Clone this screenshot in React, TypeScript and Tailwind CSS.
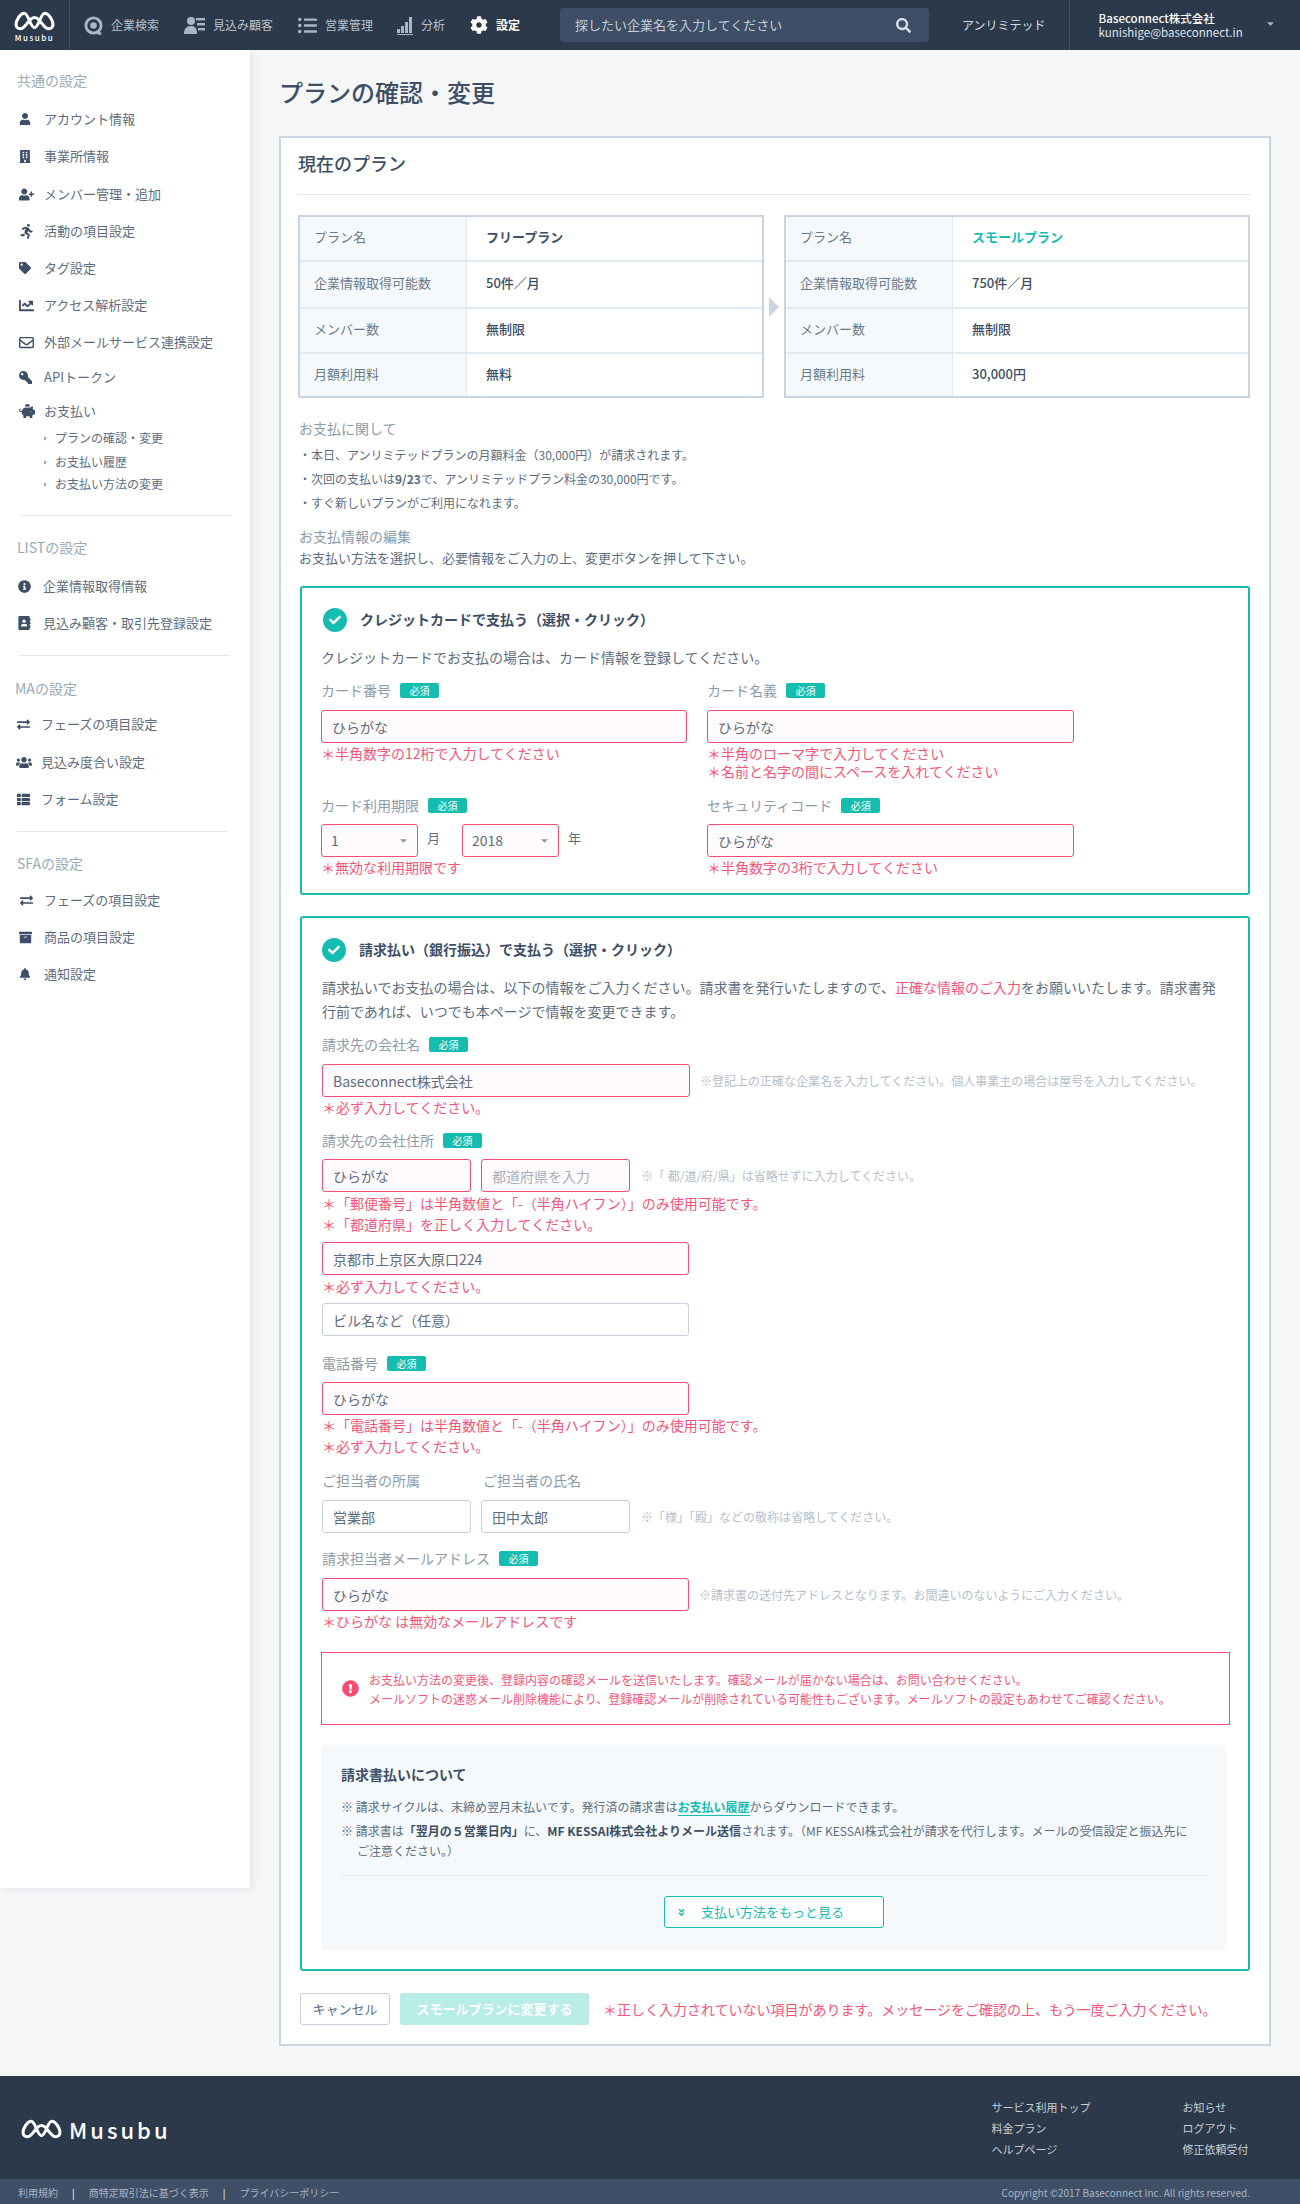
import { ReactNode } from 'react';
import {
  FaUser, FaBuilding, FaUserPlus, FaRunning, FaTag, FaChartLine, FaRegEnvelope, FaKey, FaPiggyBank,
  FaInfoCircle, FaAddressBook, FaExchangeAlt, FaUsers, FaThList, FaArchive, FaBell, FaCheck, FaSearch,
  FaCog, FaExclamationCircle, FaAngleDoubleDown, FaCaretDown, FaCaretRight, FaListUl,
} from 'react-icons/fa';

const LogoMark = ({ className }: { className: string }) => (
  <svg viewBox="0 0 40 19" className={className} fill="none" stroke="white" strokeWidth="3" strokeLinejoin="round" strokeLinecap="round">
    <path d="M2 13 C2 9 6 2 10 2 C14 2 16 16 20 16 C24 16 26 2 30 2 C34 2 38 9 38 13 C38 15.5 36 17 34 17 C28 17 26 6 20 6 C14 6 12 17 6 17 C4 17 2 15.5 2 13 Z" />
  </svg>
);

const Header = () => {
  const nav = [
    { label: '企業検索', cls: 'ml-[14px]', icon: <svg viewBox="0 0 20 20" className="w-[19px] h-[19px]"><circle cx="10" cy="10" r="8" fill="none" stroke="#a9b6c4" strokeWidth="3" /><circle cx="10" cy="10" r="3.5" fill="#a9b6c4" /><path d="M13 17 L18 19" stroke="#a9b6c4" strokeWidth="3" /></svg> },
    { label: '見込み顧客', cls: 'ml-[25px]', icon: <svg viewBox="0 0 21 19" className="w-[21px] h-[19px]" fill="#a9b6c4"><circle cx="7" cy="5" r="4" /><path d="M0 18 C0 12 3 10 7 10 C11 10 13 12 13 18 Z" /><rect x="12" y="2" width="9" height="2.4" /><rect x="13" y="7" width="8" height="2.4" /><rect x="14" y="12" width="7" height="2.4" /></svg> },
    { label: '営業管理', cls: 'ml-[25px]', icon: <FaListUl className="w-[19px] h-[19px] text-[#a9b6c4]" /> },
    { label: '分析', cls: 'ml-[24px]', icon: <svg viewBox="0 0 16 19" className="w-[16px] h-[19px]" fill="#a9b6c4"><rect x="0" y="13" width="3" height="4" /><rect x="4" y="10" width="3" height="7" /><rect x="8" y="6" width="3" height="11" /><rect x="12" y="1" width="3" height="16" /><rect x="0" y="18" width="16" height="1" /></svg> },
  ];
  return (
    <header className="h-[50px] bg-[#2c394b] flex items-center">
      <div className="w-[70px] h-full border-r border-[#3f4f68] flex flex-col items-center pt-[11px]">
        <LogoMark className="w-[41px] h-[20px]" />
        <span className="text-[8px] leading-[10px] mt-[2px] text-white tracking-[1.5px] font-medium">Musubu</span>
      </div>
      {nav.map((n) => (
        <div key={n.label} className={`flex items-center ${n.cls} text-[12px] text-[#b6c1cc]`}>
          {n.icon}
          <span className="ml-[8px]">{n.label}</span>
        </div>
      ))}
      <div className="flex items-center ml-[25px] text-[12px] text-white font-bold">
        <FaCog className="w-[18px] h-[18px]" />
        <span className="ml-[8px]">設定</span>
      </div>
      <div className="ml-[40px] w-[369px] h-[34px] rounded-[4px] bg-[#3d4e66] flex items-center justify-between pl-[15px] pr-[18px] text-[13px] text-[#c5cfd9]">
        <span>探したい企業名を入力してください</span>
        <FaSearch className="w-[15px] h-[15px] text-[#d5dde5]" />
      </div>
      <span className="ml-[33px] text-[12px] text-[#d5dde5]">アンリミテッド</span>
      <div className="ml-[23px] h-full border-l border-[#3f4f68] pl-[29px] flex items-center">
        <div className="text-[11.5px] leading-[14px] text-white">
          <div className="font-medium">Baseconnect株式会社</div>
          <div className="text-[#dfe5ec]">kunishige@baseconnect.in</div>
        </div>
        <FaCaretDown className="ml-[22px] w-[11px] h-[11px] text-[#a9b6c4] mb-[3px]" />
      </div>
    </header>
  );
};

const SideTitle = ({ cls, children }: { cls: string; children: ReactNode }) => (
  <div className={`${cls} h-[20px] leading-[20px] text-[14px] text-[#9aa9b6]`}>{children}</div>
);

const SideItem = ({ cls, icon, label, pad }: { cls: string; icon: ReactNode; label: string; pad: string }) => (
  <div className={`${cls} ${pad} h-[20px] flex items-center text-[13px] text-[#5d6d80]`}>
    <span className="w-[25px] shrink-0 text-[#3d4e66] flex items-center">{icon}</span>
    <span>{label}</span>
  </div>
);

const Divider = ({ cls }: { cls: string }) => <div className={`${cls} w-[211px] h-px bg-[#e1e8ef]`} />;

const SubItem = ({ cls, label }: { cls: string; label: string }) => (
  <div className={`${cls} pl-[42px] h-[18px] flex items-center text-[12px] text-[#5d6d80]`}>
    <FaCaretRight className="w-[7px] h-[7px] text-[#8c9baa] mr-[6px]" />
    {label}
  </div>
);

const Sidebar = () => {
  const i = 'w-[15px] h-[15px]';
  const common: [string, ReactNode, string][] = [
    ['mt-[19px]', <FaUser className="w-[12px] h-[12px]" />, 'アカウント情報'],
    ['mt-[17px]', <FaBuilding className="w-[12px] h-[13px]" />, '事業所情報'],
    ['mt-[18px]', <FaUserPlus className={i} />, 'メンバー管理・追加'],
    ['mt-[17px]', <FaRunning className={i} />, '活動の項目設定'],
    ['mt-[17px]', <FaTag className="w-[12px] h-[12px]" />, 'タグ設定'],
    ['mt-[17px]', <FaChartLine className={i} />, 'アクセス解析設定'],
    ['mt-[17px]', <FaRegEnvelope className={i} />, '外部メールサービス連携設定'],
    ['mt-[15px]', <FaKey className="w-[13px] h-[13px] -scale-x-100" />, 'APIトークン'],
    ['mt-[14px]', <FaPiggyBank className="w-[16px] h-[16px]" />, 'お支払い'],
  ];
  return (
    <aside className="w-[250px] h-[1838px] shrink-0 bg-white shadow-[2px_0_8px_rgba(61,78,102,0.12)] pt-[20px]">
      <SideTitle cls="pl-[17px]">共通の設定</SideTitle>
      {common.map(([cls, icon, label]) => (
        <SideItem key={label} cls={cls} icon={icon} label={label} pad="pl-[19px]" />
      ))}
      <SubItem cls="mt-[8px]" label="プランの確認・変更" />
      <SubItem cls="mt-[6px]" label="お支払い履歴" />
      <SubItem cls="mt-[4px]" label="お支払い方法の変更" />
      <Divider cls="mt-[22px] ml-[21px]" />
      <SideTitle cls="mt-[21px] pl-[17px]">LISTの設定</SideTitle>
      <SideItem cls="mt-[19px]" pad="pl-[18px]" icon={<FaInfoCircle className="w-[13px] h-[13px]" />} label="企業情報取得情報" />
      <SideItem cls="mt-[17px]" pad="pl-[18px]" icon={<FaAddressBook className="w-[13px] h-[14px]" />} label="見込み顧客・取引先登録設定" />
      <Divider cls="mt-[22px] ml-[19px]" />
      <SideTitle cls="mt-[22px] pl-[15px]">MAの設定</SideTitle>
      <SideItem cls="mt-[16px]" pad="pl-[16px]" icon={<FaExchangeAlt className="w-[15px] h-[13px]" />} label="フェーズの項目設定" />
      <SideItem cls="mt-[18px]" pad="pl-[16px]" icon={<FaUsers className="w-[16px] h-[15px]" />} label="見込み度合い設定" />
      <SideItem cls="mt-[17px]" pad="pl-[16px]" icon={<FaThList className="w-[15px] h-[13px]" />} label="フォーム設定" />
      <Divider cls="mt-[22px] ml-[17px]" />
      <SideTitle cls="mt-[21px] pl-[17px]">SFAの設定</SideTitle>
      <SideItem cls="mt-[17px]" pad="pl-[19px]" icon={<FaExchangeAlt className="w-[15px] h-[13px]" />} label="フェーズの項目設定" />
      <SideItem cls="mt-[17px]" pad="pl-[19px]" icon={<FaArchive className="w-[13px] h-[13px]" />} label="商品の項目設定" />
      <SideItem cls="mt-[17px]" pad="pl-[19px]" icon={<FaBell className="w-[12px] h-[12px]" />} label="通知設定" />
    </aside>
  );
};

const rowSizes = ['h-[43px]', 'h-[46.5px] border-t-2 border-[#e1e9f1]', 'h-[45px] border-t-2 border-[#e1e9f1]', 'h-[44.5px] border-t-2 border-[#e1e9f1]'];
const rowText = ['pb-[3px]', 'pb-[3px]', 'pb-[3px]', 'pb-[2px]'];

const PlanTable = ({ rows, accent }: { rows: string[][]; accent?: boolean }) => (
  <div className="flex-1 border-2 border-[#c9d5e0] bg-white">
    {rows.map((r, idx) => (
      <div key={r[0]} className={`flex items-stretch ${rowSizes[idx]}`}>
        <div className={`w-[167px] bg-[#f6f9fc] border-r border-[#e1e9f1] pl-[14px] flex items-center text-[13px] text-[#6a7a8b] ${rowText[idx]}`}>{r[0]}</div>
        <div className={`pl-[19px] flex items-center text-[13px] ${rowText[idx]} ${idx === 0 ? 'font-bold' : 'font-medium'} ${idx === 0 && accent ? 'text-[#14bdb0]' : 'text-[#3d4e66]'}`}>{r[1]}</div>
      </div>
    ))}
  </div>
);

const Label = ({ text, required = true }: { text: string; required?: boolean }) => (
  <div className="h-[20px] flex items-center text-[14px] text-[#8c9baa]">
    {text}
    {required && <span className="ml-[9px] w-[39px] h-[15px] rounded-[2px] bg-[#14bdb0] text-white text-[10px] leading-[15px] text-center">必須</span>}
  </div>
);

const Err = ({ cls = '', children }: { cls?: string; children: ReactNode }) => (
  <div className={`${cls} text-[14px] leading-[21px] text-[#f6557a]`}>{children}</div>
);

const Field = ({ value, placeholder, w, ok }: { value?: string; placeholder?: string; w: string; ok?: boolean }) => (
  <input
    readOnly
    value={value}
    placeholder={placeholder}
    className={`${w} h-[33px] block rounded-[3px] border px-[10px] text-[14px] text-[#5d6d80] placeholder:text-[#a5b1bd] outline-none ${ok ? 'border-[#c5d1de] bg-white' : 'border-[#f64d70] bg-[#fffafb]'}`}
  />
);

const Hint = ({ cls, children }: { cls: string; children: ReactNode }) => (
  <span className={`${cls} text-[12px] text-[#b5c0cb]`}>{children}</span>
);

const Select = ({ value, w }: { value: string; w: string }) => (
  <div className={`${w} relative`}>
    <select defaultValue={value} className="w-full h-[33px] appearance-none rounded-[3px] border border-[#f64d70] bg-[#fffafb] px-[9px] text-[14px] text-[#5d6d80] outline-none">
      <option>{value}</option>
    </select>
    <FaCaretDown className="absolute right-[9px] top-[11px] w-[11px] h-[11px] text-[#8c9baa]" />
  </div>
);

const Check = () => (
  <span className="w-[24px] h-[24px] rounded-full bg-[#14bdb0] flex items-center justify-center">
    <FaCheck className="w-[12px] h-[12px] text-white" />
  </span>
);

const CreditBox = () => (
  <section className="mt-[18px] ml-[2px] mr-[1px] border-2 border-[#14bdb0] rounded-[3px] pl-[19px] pr-[20px] pt-[20px] pb-[15px]">
    <div className="flex items-center h-[24px] text-[14px] font-bold text-[#3d4e66]">
      <span className="ml-[2px]"><Check /></span>
      <span className="ml-[13px] pb-[2px]">クレジットカードで支払う（選択・クリック）</span>
    </div>
    <p className="mt-[15px] h-[20px] leading-[20px] text-[14px] text-[#5d6d80]">クレジットカードでお支払の場合は、カード情報を登録してください。</p>
    <div className="mt-[13px] grid grid-cols-[366px_367px] gap-x-[20px]">
      <div className="h-[115px]">
        <Label text="カード番号" />
        <div className="mt-[10px]"><Field w="w-[366px]" value="ひらがな" /></div>
        <Err>＊半角数字の12桁で入力してください</Err>
      </div>
      <div className="h-[115px]">
        <Label text="カード名義" />
        <div className="mt-[10px]"><Field w="w-[367px]" value="ひらがな" /></div>
        <Err>＊半角のローマ字で入力してください</Err>
        <Err cls="-mt-[3px]">＊名前と名字の間にスペースを入れてください</Err>
      </div>
      <div>
        <Label text="カード利用期限" />
        <div className="mt-[9px] flex items-start text-[13px] text-[#5d6d80]">
          <Select value="1" w="w-[97px]" />
          <span className="ml-[9px] mt-[4px]">月</span>
          <span className="ml-[22px]"><Select value="2018" w="w-[97px]" /></span>
          <span className="ml-[9px] mt-[4px]">年</span>
        </div>
        <Err>＊無効な利用期限です</Err>
      </div>
      <div>
        <Label text="セキュリティコード" />
        <div className="mt-[9px]"><Field w="w-[367px]" value="ひらがな" /></div>
        <Err>＊半角数字の3桁で入力してください</Err>
      </div>
    </div>
  </section>
);

const BankBox = () => (
  <section className="mt-[21px] ml-[2px] mr-[1px] border-2 border-[#14bdb0] rounded-[3px] pl-[20px] pr-[21px] pt-[20px] pb-[19px]">
    <div className="flex items-center h-[24px] text-[14px] font-bold text-[#3d4e66]">
      <Check />
      <span className="ml-[13px] pb-[2px]">請求払い（銀行振込）で支払う（選択・クリック）</span>
    </div>
    <p className="mt-[13px] leading-[24px] text-[14px] text-[#5d6d80]">
      請求払いでお支払の場合は、以下の情報をご入力ください。請求書を発行いたしますので、<span className="text-[#f6557a]">正確な情報のご入力</span>をお願いいたします。請求書発行前であれば、いつでも本ページで情報を変更できます。
    </p>

    <div className="mt-[11px]"><Label text="請求先の会社名" /></div>
    <div className="mt-[10px] flex items-center">
      <Field w="w-[368px]" value="Baseconnect株式会社" />
      <Hint cls="ml-[10px]">※登記上の正確な企業名を入力してください。個人事業主の場合は屋号を入力してください。</Hint>
    </div>
    <Err>＊必ず入力してください。</Err>

    <div className="mt-[12px]"><Label text="請求先の会社住所" /></div>
    <div className="mt-[9px] flex items-center">
      <Field w="w-[149px]" value="ひらがな" />
      <span className="ml-[10px]"><Field w="w-[149px]" placeholder="都道府県を入力" /></span>
      <Hint cls="ml-[11px]">※「 都/道/府/県」は省略せずに入力してください。</Hint>
    </div>
    <Err cls="mt-[1px]">＊「郵便番号」は半角数値と「-（半角ハイフン）」のみ使用可能です。</Err>
    <Err>＊「都道府県」を正しく入力してください。</Err>
    <div className="mt-[7px]"><Field w="w-[367px]" value="京都市上京区大原口224" /></div>
    <Err cls="mt-[1px]">＊必ず入力してください。</Err>
    <div className="mt-[6px]"><Field w="w-[367px]" value="ビル名など（任意）" ok /></div>

    <div className="mt-[17px]"><Label text="電話番号" /></div>
    <div className="mt-[9px]"><Field w="w-[367px]" value="ひらがな" /></div>
    <Err>＊「電話番号」は半角数値と「-（半角ハイフン）」のみ使用可能です。</Err>
    <Err>＊必ず入力してください。</Err>

    <div className="mt-[13px] flex">
      <div className="w-[161px]"><Label text="ご担当者の所属" required={false} /></div>
      <Label text="ご担当者の氏名" required={false} />
    </div>
    <div className="mt-[10px] flex items-center">
      <Field w="w-[149px]" value="営業部" ok />
      <span className="ml-[10px]"><Field w="w-[149px]" value="田中太郎" ok /></span>
      <Hint cls="ml-[11px]">※「様」「殿」などの敬称は省略してください。</Hint>
    </div>

    <div className="mt-[15px]"><Label text="請求担当者メールアドレス" /></div>
    <div className="mt-[10px] flex items-center">
      <Field w="w-[367px]" value="ひらがな" />
      <Hint cls="ml-[10px]">※請求書の送付先アドレスとなります。お間違いのないようにご入力ください。</Hint>
    </div>
    <Err>＊ひらがな は無効なメールアドレスです</Err>

    <div className="mt-[20px] -ml-[1px] -mr-[3px] h-[73px] border border-[#f64d70] flex items-center pl-[20px] pr-[10px]">
      <FaExclamationCircle className="w-[17px] h-[17px] text-[#f64d70] shrink-0" />
      <div className="ml-[10px] text-[12px] leading-[19px] text-[#f6557a]">
        <div>お支払い方法の変更後、登録内容の確認メールを送信いたします。確認メールが届かない場合は、お問い合わせください。</div>
        <div>メールソフトの迷惑メール削除機能により、登録確認メールが削除されている可能性もございます。メールソフトの設定もあわせてご確認ください。</div>
      </div>
    </div>

    <div className="mt-[20px] -ml-[1px] bg-[#f6f9fc] px-[20px] pt-[19px] pb-[22px]">
      <h4 className="h-[20px] leading-[20px] text-[14px] font-bold text-[#3d4e66]">請求書払いについて</h4>
      <p className="mt-[13px] h-[20px] leading-[20px] text-[12px] text-[#5d6d80]">
        ※ 請求サイクルは、末締め翌月末払いです。発行済の請求書は<span className="font-bold text-[#14bdb0] border-b border-[#14bdb0]">お支払い履歴</span>からダウンロードできます。
      </p>
      <p className="mt-[4px] pl-[16px] -indent-[16px] leading-[20px] text-[12px] text-[#5d6d80]">
        ※ 請求書は<b className="text-[#3d4e66]">「翌月の５営業日内」</b>に、<b className="text-[#3d4e66]">MF KESSAI株式会社よりメール送信</b>されます。（MF KESSAI株式会社が請求を代行します。メールの受信設定と振込先に<br />ご注意ください。）
      </p>
      <div className="mt-[14px] h-px bg-[#e1e9f1]" />
      <button className="mt-[20px] mx-auto flex items-center w-[220px] h-[32px] rounded-[3px] border border-[#14bdb0] bg-white pl-[12px] text-[13px] text-[#14bdb0]">
        <FaAngleDoubleDown className="w-[9px] h-[9px]" />
        <span className="ml-[15px]">支払い方法をもっと見る</span>
      </button>
    </div>
  </section>
);

const Footer = () => (
  <footer>
    <div className="h-[103px] bg-[#2c394b] flex">
      <div className="pl-[21px] pt-[43px] flex items-start">
        <LogoMark className="w-[41px] h-[20px]" />
        <span className="ml-[7px] text-[22px] leading-[20px] font-medium tracking-[3px] text-white">Musubu</span>
      </div>
      <div className="ml-[821px] pt-[21px] w-[191px] text-[11px] leading-[21px] text-[#c5cfd9]">
        <div>サービス利用トップ</div>
        <div>料金プラン</div>
        <div>ヘルプページ</div>
      </div>
      <div className="pt-[21px] text-[11px] leading-[21px] text-[#c5cfd9]">
        <div>お知らせ</div>
        <div>ログアウト</div>
        <div>修正依頼受付</div>
      </div>
    </div>
    <div className="h-[26px] bg-[#3f4f68] flex items-center justify-between pl-[18px] pr-[50px] text-[10px] text-[#a9b5c4]">
      <div className="flex items-center">
        <span>利用規約</span>
        <span className="mx-[14px] text-white">|</span>
        <span>商特定取引法に基づく表示</span>
        <span className="mx-[14px] text-white">|</span>
        <span>プライバシーポリシー</span>
      </div>
      <span>Copyright ©2017 Baseconnect Inc. All rights reserved.</span>
    </div>
  </footer>
);

const App = () => {
  const before = [
    ['プラン名', 'フリープラン'],
    ['企業情報取得可能数', '50件／月'],
    ['メンバー数', '無制限'],
    ['月額利用料', '無料'],
  ];
  const after = [
    ['プラン名', 'スモールプラン'],
    ['企業情報取得可能数', '750件／月'],
    ['メンバー数', '無制限'],
    ['月額利用料', '30,000円'],
  ];
  return (
    <div className="font-['Noto_Sans_CJK_JP','Noto_Sans',sans-serif] bg-[#f5f6f8] text-[#3d4e66]">
      <Header />
      <div className="flex items-start">
        <Sidebar />
        <main className="pl-[29px] w-[1021px] pb-[30px]">
          <h1 className="mt-[25px] h-[34px] leading-[34px] text-[24px] font-medium text-[#3d4e66]">プランの確認・変更</h1>
          <div className="mt-[27px] border-2 border-[#c9d5e0] bg-white pl-[17px] pr-[18px] pt-[12px] pb-[19px]">
            <h2 className="h-[26px] leading-[26px] text-[18px] font-medium text-[#3d4e66]">現在のプラン</h2>
            <div className="mt-[18px] h-px bg-[#e1e9f1]" />
            <div className="mt-[20px] mr-[1px] flex items-center justify-between">
              <PlanTable rows={before} />
              <svg viewBox="0 0 10 20" className="w-[10px] h-[20px] mx-[5px] shrink-0"><path d="M0 0 L10 10 L0 20 Z" fill="#c9d5e0" /></svg>
              <PlanTable rows={after} accent />
            </div>
            <div className="mt-[20px] pl-[1px] h-[20px] leading-[20px] text-[14px] text-[#8c9baa]">お支払に関して</div>
            <div className="mt-[5px] pl-[1px] text-[12px] leading-[24px] text-[#5d6d80]">
              <div>・本日、アンリミテッドプランの月額料金（30,000円）が請求されます。</div>
              <div>・次回の支払いは<b>9/23</b>で、アンリミテッドプラン料金の30,000円です。</div>
              <div>・すぐ新しいプランがご利用になれます。</div>
            </div>
            <div className="mt-[11px] pl-[1px] h-[20px] leading-[20px] text-[14px] text-[#8c9baa]">お支払情報の編集</div>
            <p className="mt-[2px] pl-[1px] h-[20px] leading-[20px] text-[13px] text-[#5d6d80]">お支払い方法を選択し、必要情報をご入力の上、変更ボタンを押して下さい。</p>
            <CreditBox />
            <BankBox />
            <div className="mt-[22px] ml-[2px] flex items-center">
              <button className="w-[90px] h-[32px] rounded-[3px] border border-[#c5d1de] bg-white text-[13px] text-[#5d6d80]">キャンセル</button>
              <button className="ml-[10px] w-[189px] h-[32px] rounded-[3px] bg-[#b8ece7] text-[13px] font-bold text-white">スモールプランに変更する</button>
              <span className="ml-[14px] text-[14px] text-[#f6557a]">＊正しく入力されていない項目があります。メッセージをご確認の上、もう一度ご入力ください。</span>
            </div>
          </div>
        </main>
      </div>
      <Footer />
    </div>
  );
};

export default App;
